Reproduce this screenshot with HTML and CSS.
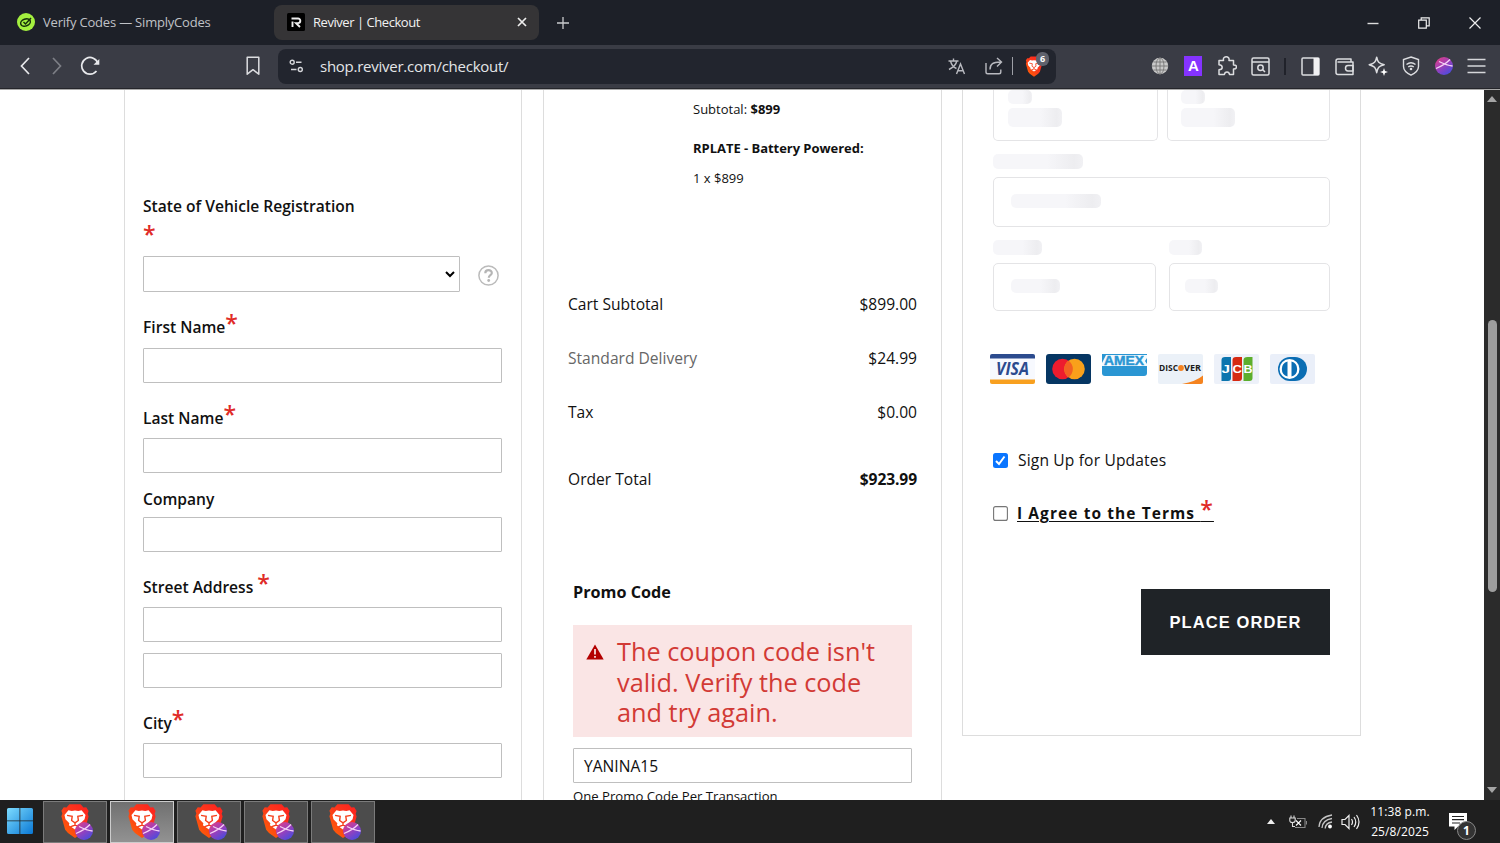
FILE: index.html
```html
<!DOCTYPE html>
<html lang="en">
<head>
<meta charset="utf-8">
<title>Reviver | Checkout</title>
<link rel="stylesheet" href="styles.css">
</head>
<body>
<svg class="defs" width="0" height="0" aria-hidden="true">
  <defs>
    <linearGradient id="flame" x1="1" y1="0" x2="0" y2="1"><stop offset="0" stop-color="#ff1f1f"/><stop offset=".5" stop-color="#fb3a1b"/><stop offset="1" stop-color="#ff6a00"/></linearGradient>
    <linearGradient id="orb" x1="0" y1="0" x2=".7" y2="1"><stop offset="0" stop-color="#e8407c"/><stop offset=".5" stop-color="#a13fb8"/><stop offset="1" stop-color="#4b4bdd"/></linearGradient>
    <linearGradient id="win" x1="0" y1="0" x2="1" y2="1"><stop offset="0" stop-color="#7ddcff"/><stop offset="1" stop-color="#0a78d4"/></linearGradient>
    <symbol id="lion" viewBox="0 0 32 36">
      <path fill="url(#flame)" d="M10 0h12l3 3.500 3-.3 2.500 4-1 3 1 3-4 14-3 3.500L16 36l-7.500-5.300-3-3.500L1.500 13l1-3-1-3L4 3.200l3 .3z"/>
      <path fill="#fff" d="M9 6.500l3.500.8L16 6.800l3.500.5L23 6.500l4.200 5-1 4.500-4.200 4.500.5 2-6.500 4.500-6.500-4.500.5-2L5.800 16l-1-4.500z"/>
      <path fill="none" stroke="#f5401c" stroke-width="1.500" d="M7.500 12l5.500 1-.6 4.500 3.600 2.500 3.600-2.500-.6-4.500 5.500-1M16 20v2.500M11 24.200l5-1.900 5 1.900"/>
    </symbol>
    <symbol id="ball" viewBox="0 0 18 18">
      <circle cx="9" cy="9" r="9" fill="url(#orb)"/>
      <path fill="none" stroke="#f6d3f6" stroke-width="1.300" d="M1 11.500C6 9.500 11 6.500 15 2.500M4 4.500c4 2 8 4 13.500 4.500"/>
    </symbol>
  </defs>
</svg>

<header class="tabs">
  <div class="tab">
    <svg width="18" height="18" viewBox="0 0 18 18"><circle cx="9" cy="9" r="9" fill="#a4f03f"/><g fill="none" stroke="#17300c" stroke-width="1.500"><ellipse cx="8.500" cy="9.500" rx="5" ry="3.500" transform="rotate(-20 8.500 9.500)"/><path d="M6.500 9l2 2 5.500-6"/></g></svg>
    <span class="tab-name">Verify Codes — SimplyCodes</span>
  </div>
  <div class="tab tab-on">
    <svg width="18" height="18" viewBox="0 0 18 18"><rect width="18" height="18" rx="1.500" fill="#000"/><path d="M4.500 5.500H11a2.300 2.300 0 0 1 0 4.600H9l4 3.900M5.500 8.500V14" fill="none" stroke="#eee" stroke-width="1.900"/></svg>
    <span class="tab-name">Reviver | Checkout</span>
    <svg class="tab-x" width="10" height="10" viewBox="0 0 10 10"><path d="M1 1l8 8M9 1L1 9" stroke="#eee" stroke-width="1.700"/></svg>
  </div>
  <svg class="plus" width="12" height="12" viewBox="0 0 12 12"><path d="M6 0v12M0 6h12" stroke="#c9cacd" stroke-width="1.300"/></svg>
  <div class="win-btns">
    <svg width="12" height="12" viewBox="0 0 12 12"><path d="M.5 6.500h11" stroke="#ddd" stroke-width="1.400"/></svg>
    <svg width="12" height="12" viewBox="0 0 12 12"><path d="M.7 3.200h7.600v8H.7zM3.200 3V.8h8v8H8.500" fill="none" stroke="#eee" stroke-width="1.200"/></svg>
    <svg width="12" height="12" viewBox="0 0 12 12"><path d="M.5.500l11 11M11.500.500l-11 11" stroke="#eee" stroke-width="1.200"/></svg>
  </div>
</header>

<nav class="toolbar">
  <svg class="back" width="10" height="18" viewBox="0 0 10 18"><path d="M9 1L1.500 9 9 17" fill="none" stroke="#e8e9ec" stroke-width="1.700"/></svg>
  <svg class="fwd" width="10" height="18" viewBox="0 0 10 18"><path d="M1 1l7.500 8L1 17" fill="none" stroke="#7d7f86" stroke-width="1.700"/></svg>
  <svg class="reload" width="20" height="20" viewBox="0 0 20 20"><path d="M18 7.500A8.300 8.300 0 1 0 16.500 15" fill="none" stroke="#e8e9ec" stroke-width="1.700"/><path d="M13.500 8.800h5.800V3z" fill="#e8e9ec"/></svg>
  <svg class="mark" width="14" height="20" viewBox="0 0 14 20"><path d="M1.200 1.200h11.600v17L7 13.700l-5.800 4.500z" fill="none" stroke="#dcdde0" stroke-width="1.500" stroke-linejoin="round"/></svg>
  <div class="url">
    <svg width="15" height="14" viewBox="0 0 15 14"><g fill="none" stroke="#d5d6da" stroke-width="1.400"><circle cx="3.200" cy="3.200" r="2"/><path d="M7 3.200h5.500M2 10.500h5.500"/><circle cx="11.300" cy="10.500" r="2"/></g></svg>
    <span class="address">shop.reviver.com/checkout/</span>
    <svg class="translate" width="18" height="17" viewBox="0 0 18 17"><path d="M.5 3h10M5.500.500V3M8.800 3C8 7 4 10 1 11.500M2.500 3C3.500 7 6 9.500 8.500 10.500M8.500 16l4-10 4 10M10 12.700h5.200" fill="none" stroke="#b9bac0" stroke-width="1.400"/></svg>
    <svg class="share" width="18" height="18" viewBox="0 0 18 18"><path d="M1 6v9q0 1.800 1.800 1.800H14q1.800 0 1.800-1.800v-2.500M5 12.500C5 7 8 4.800 16 5M12 1l4.500 4-4.500 4.500" fill="none" stroke="#b9bac0" stroke-width="1.400"/></svg>
    <i class="bar"></i>
    <div class="shield"><svg width="18" height="21"><use href="#lion"/></svg><b class="count">6</b></div>
  </div>
  <div class="ext">
    <svg width="18" height="18" viewBox="0 0 18 18"><circle cx="9" cy="9" r="8.200" fill="#c9c9c9"/><path d="M9 1v16M1 9h16M2.500 5h13M2.500 13h13" stroke="#777" fill="none" stroke-width=".9"/><ellipse cx="9" cy="9" rx="4" ry="8" fill="none" stroke="#777" stroke-width=".9"/></svg>
    <span class="letter">A</span>
    <svg width="20" height="20" viewBox="0 0 20 20"><path d="M2 4.500h4.500C5.800 1.500 8 .8 9.300.8s3.300.9 2.700 3.700h4.500V9c3-.2 3 1.500 3 2s-.3 2-3 2v5.500h-4c-.3-2-1.500-2.500-2.500-2.500s-2.300.5-2.600 2.500H2v-4.800c2.500 0 3.200-1.200 3.200-2.500S4.300 9 2 8.800z" fill="none" stroke="#dcdde0" stroke-width="1.500" stroke-linejoin="round"/></svg>
    <svg width="19" height="19" viewBox="0 0 19 19"><g fill="none" stroke="#dcdde0" stroke-width="1.500"><rect x="1" y="1" width="17" height="17" rx="1.500"/><path d="M1 5h17M11.500 12.500l2.500 2.500"/><circle cx="9.500" cy="10.700" r="2.700"/></g></svg>
    <i class="sep"></i>
    <svg width="19" height="19" viewBox="0 0 19 19"><rect x="1" y="1" width="17" height="17" rx="1" fill="none" stroke="#dcdde0" stroke-width="1.500"/><path d="M12.500 1H18v17h-5.500z" fill="#f1f1f3"/></svg>
    <svg width="19" height="19" viewBox="0 0 19 19"><g fill="none" stroke="#dcdde0" stroke-width="1.500" stroke-linejoin="round"><path d="M16 5V2H3Q1 2 1 4v11.500Q1 17.500 3 17.500h15V5H2.500"/><path d="M18 8.500h-5q-2.500 0-2.500 2.700t2.500 2.700h5z"/></g></svg>
    <svg width="20" height="20" viewBox="0 0 20 20"><path d="M8.700 1.200c1 5 2 6.200 7.500 7.500-5.500 1.500-6.500 2.800-7.500 8-1-5.200-2.200-6.500-7.500-8 5.300-1.300 6.500-2.500 7.500-7.500z" fill="none" stroke="#dcdde0" stroke-width="1.500" stroke-linejoin="round"/><path d="M16 12l1 3 3 1-3 1-1 3-1-3-3-1 3-1z" fill="#fff"/></svg>
    <svg width="18" height="20" viewBox="0 0 18 20"><g fill="none" stroke="#dcdde0" stroke-width="1.400"><path d="M9 1l7.500 2.500v7q0 5-7.500 8.700Q1.500 15.500 1.500 10.500v-7z"/><path d="M4.500 8.500q4.500-3.500 9 0M6.200 11q2.800-2 5.600 0"/></g><circle cx="9" cy="13" r="1.300" fill="#dcdde0"/></svg>
    <svg width="18" height="18"><use href="#ball"/></svg>
    <svg width="19" height="16" viewBox="0 0 19 16"><path d="M.5 1.500h18M.5 8h18M.5 14.500h18" stroke="#d5d6da" stroke-width="1.700"/></svg>
  </div>
</nav>

<div class="view">
  <main class="page">
    <section class="col ship">
      <div class="field state"><label>State of Vehicle Registration<br><sup>*</sup></label>
        <div class="pick"><div class="box select"><svg width="10" height="7" viewBox="0 0 10 7"><path d="M1 1l4 4 4-4" fill="none" stroke="#000" stroke-width="2"/></svg></div>
        <svg class="help" width="21" height="21" viewBox="0 0 21 21"><circle cx="10.500" cy="10.500" r="9.600" fill="none" stroke="#bbb" stroke-width="1.500"/><path d="M7.300 8.200c0-4 6.500-4 6.500-.3 0 2.300-3 2.300-3 4.800" fill="none" stroke="#b5b5b5" stroke-width="2.200"/><circle cx="10.700" cy="15.500" r="1.400" fill="#b5b5b5"/></svg></div>
      </div>
      <div class="field first"><label>First Name<sup>*</sup></label><div class="box"></div></div>
      <div class="field last"><label>Last Name<sup>*</sup></label><div class="box"></div></div>
      <div class="field company"><label>Company</label><div class="box"></div></div>
      <div class="field street"><label>Street Address <sup>*</sup></label><div class="box"></div><div class="box"></div></div>
      <div class="field city"><label>City<sup>*</sup></label><div class="box"></div></div>
    </section>

    <section class="col order">
      <div class="item">
        <p>Subtotal: <b>$899</b></p>
        <p class="item-name">RPLATE - Battery Powered:</p>
        <p>1 x $899</p>
      </div>
      <div class="totals">
        <div class="row"><span>Cart Subtotal</span><span>$899.00</span></div>
        <div class="row"><span class="muted">Standard Delivery</span><span>$24.99</span></div>
        <div class="row"><span>Tax</span><span>$0.00</span></div>
        <div class="row grand"><span>Order Total</span><b>$923.99</b></div>
      </div>
      <div class="promo">
        <h2>Promo Code</h2>
        <div class="error">
          <svg width="18" height="16" viewBox="0 0 18 16"><path d="M9 .500L17.700 15.500H.3z" fill="#b30000"/><path d="M9 5v5.500M9 12v1.800" stroke="#fae5e5" stroke-width="1.700"/></svg>
          <span>The coupon code isn't<br>valid. Verify the code<br>and try again.</span>
        </div>
        <div class="box code">YANINA15</div>
        <p class="note">One Promo Code Per Transaction</p>
      </div>
    </section>

    <section class="col pay">
      <div class="pair methods">
        <div class="card"><i class="sk s23"></i><i class="sk s53"></i></div>
        <div class="card"><i class="sk s23"></i><i class="sk s53"></i></div>
      </div>
      <i class="sk s90"></i>
      <div class="card wide"><i class="sk s90 thin"></i></div>
      <div class="pair small">
        <div class="group"><i class="sk s49"></i><div class="card"><i class="sk s49 thin"></i></div></div>
        <div class="group"><i class="sk s32"></i><div class="card"><i class="sk s32 thin"></i></div></div>
      </div>
      <div class="brands">
        <svg width="45" height="30" viewBox="0 0 45 30"><rect width="45" height="30" rx="2" fill="#f7f9fe"/><path d="M0 4.500V2q0-2 2-2h41q2 0 2 2v2.500z" fill="#2c4b8e"/><path d="M0 25.500h45V28q0 2-2 2H2q-2 0-2-2z" fill="#f8a01f"/><text x="6" y="20.500" textLength="33" lengthAdjust="spacingAndGlyphs" class="visa">VISA</text></svg>
        <svg width="45" height="30" viewBox="0 0 45 30"><rect width="45" height="30" rx="3" fill="#063663"/><circle cx="16.500" cy="15" r="10.300" fill="#ed1c2e"/><circle cx="28.500" cy="15" r="10.300" fill="#f9a01b"/><path d="M22.500 6.600a10.300 10.300 0 0 1 0 16.800 10.300 10.300 0 0 1 0-16.800z" fill="#f26122"/></svg>
        <svg width="45" height="30" viewBox="0 0 45 30"><path d="M0 0h45v19q0 3-3 3H3q-3 0-3-3z" fill="#2a96d3"/><path d="M4 1h41v3l-2 3 2 3v2H0V9z" fill="#f4f9fd"/><text x="2" y="11" textLength="40" lengthAdjust="spacingAndGlyphs" class="amex">AMEX</text></svg>
        <svg width="45" height="30" viewBox="0 0 45 30"><rect width="45" height="30" rx="2" fill="#ebf1f8"/><path d="M24 30q14-2.500 21-8.500V28q0 2-2 2z" fill="#f5831f"/><text x="1" y="17.300" textLength="19" lengthAdjust="spacingAndGlyphs" class="disc">DISC</text><circle cx="23" cy="14" r="2.900" fill="#f58220"/><text x="26" y="17.300" textLength="17" lengthAdjust="spacingAndGlyphs" class="disc">VER</text></svg>
        <svg width="45" height="30" viewBox="0 0 45 30"><rect width="45" height="30" rx="2" fill="#edf1f9"/><path d="M11 3h6v21q0 3-3 3H7.500V6q0-3 3.500-3z" fill="#0b75ae"/><path d="M22 3h6v21q0 3-3 3h-6.500V6q0-3 3.500-3z" fill="#d62a12"/><path d="M33.500 3h5v21q0 3-3 3h-6V6q0-3 4-3z" fill="#5cae2c"/><g class="jcb"><text x="7.500" y="18.500" textLength="8.500" lengthAdjust="spacingAndGlyphs">J</text><text x="18.500" y="18.500" textLength="9.500" lengthAdjust="spacingAndGlyphs">C</text><text x="29.500" y="18.500" textLength="9" lengthAdjust="spacingAndGlyphs">B</text></g></svg>
        <svg width="45" height="30" viewBox="0 0 45 30"><rect width="45" height="30" rx="2" fill="#eaeff9"/><rect x="8" y="3" width="29" height="24" rx="12" fill="#0a6db3"/><circle cx="19.500" cy="15" r="10" fill="#fff"/><path d="M17.500 7.500v15a7.800 7.800 0 0 1 0-15zM21.500 7.500v15a7.800 7.800 0 0 0 0-15z" fill="#0a6db3"/></svg>
      </div>
      <div class="check updates"><svg width="15" height="15" viewBox="0 0 15 15"><rect width="15" height="15" rx="2.500" fill="#0a75ff"/><path d="M3 8l3 3 5.500-7.500" fill="none" stroke="#fff" stroke-width="2"/></svg><span>Sign Up for Updates</span></div>
      <div class="check terms"><svg width="15" height="15" viewBox="0 0 15 15"><rect x=".6" y=".6" width="13.800" height="13.800" rx="2" fill="#fff" stroke="#767676" stroke-width="1.100"/></svg><span>I Agree to the Terms <sup>*</sup></span></div>
      <button class="place">PLACE ORDER</button>
    </section>
  </main>
  <div class="scroll">
    <svg width="10" height="6" viewBox="0 0 10 6"><path d="M0 6l5-6 5 6z" fill="#a5a5a5"/></svg>
    <i class="thumb"></i>
    <svg class="down" width="10" height="6" viewBox="0 0 10 6"><path d="M0 0l5 6 5-6z" fill="#a5a5a5"/></svg>
  </div>
</div>

<footer class="taskbar">
  <svg class="start" width="26" height="26" viewBox="0 0 26 26"><path fill="url(#win)" d="M1.500 0h11v12.500H0v-11Q0 0 1.500 0zM13.300 0h11.200Q26 0 26 1.500v11H13.300zM0 13.300h12.500V26h-11Q0 26 0 24.500zM13.300 13.300H26v11.200q0 1.500-1.500 1.500H13.300z"/></svg>
  <div class="apps">
    <div class="app"><svg width="33" height="36" viewBox="0 0 33 36"><use href="#lion" width="30" height="34"/><use href="#ball" x="15" y="18" width="18" height="18"/></svg></div>
    <div class="app app-on"><svg width="33" height="36" viewBox="0 0 33 36"><use href="#lion" width="30" height="34"/><use href="#ball" x="15" y="18" width="18" height="18"/></svg></div>
    <div class="app"><svg width="33" height="36" viewBox="0 0 33 36"><use href="#lion" width="30" height="34"/><use href="#ball" x="15" y="18" width="18" height="18"/></svg></div>
    <div class="app"><svg width="33" height="36" viewBox="0 0 33 36"><use href="#lion" width="30" height="34"/><use href="#ball" x="15" y="18" width="18" height="18"/></svg></div>
    <div class="app"><svg width="33" height="36" viewBox="0 0 33 36"><use href="#lion" width="30" height="34"/><use href="#ball" x="15" y="18" width="18" height="18"/></svg></div>
  </div>
  <div class="tray">
    <svg width="8" height="5" viewBox="0 0 8 5"><path d="M0 5l4-5 4 5z" fill="#eee"/></svg>
    <svg class="power" width="18" height="14" viewBox="0 0 18 14"><g fill="none" stroke="#ddd" stroke-width="1.100"><path d="M2 .5V3M5 .5V3M.8 3h5.400v2.500q0 2-2.700 2t-2.700-2zM3.500 7.500v4H6"/><path d="M8 3.500h8v9H6" stroke="#888"/><path d="M17.500 6v3.500" stroke="#888"/><path d="M7 5.500l5 5M12 5.500l-5 5" stroke="#fff"/></g></svg>
    <svg class="wifi" width="15" height="15" viewBox="0 0 15 15"><g fill="none" stroke="#c5c5c5" stroke-width="1.300"><path d="M1 13Q1.500 3 14 1M4 14Q4.500 6 14 4.500M7.200 14.500Q7.500 9 14 8"/></g><circle cx="12" cy="12.500" r="1.900" fill="#fff"/></svg>
    <svg class="sound" width="19" height="16" viewBox="0 0 19 16"><path d="M1 5.500h3l4-4v13l-4-4H1zM10.500 5q2 3 0 6M13 3q3.500 5 0 10M15.500 1q5 7 0 14" fill="none" stroke="#eee" stroke-width="1.200"/></svg>
    <div class="clock"><span>11:38 p.m.</span><span>25/8/2025</span></div>
    <div class="notes"><svg width="18" height="18" viewBox="0 0 18 18"><path d="M0 0h18v13.500H9L5.500 17v-3.500H0z" fill="#fff"/><path d="M3 3.500h12M3 6.700h12M3 10h8" stroke="#222" stroke-width="1.200"/></svg><b class="badge">1</b></div>
  </div>
</footer>
</body>
</html>
```
FILE: styles.css
```css
* { box-sizing: border-box; }
body { margin: 0; width: 1500px; height: 843px; overflow: hidden; display: flex; flex-direction: column; background: #fff; font-family: "Open Sans", "Noto Sans", sans-serif; color: #111; }
svg { display: block; flex: none; }
i { display: block; flex: none; }
p, h2 { margin: 0; }
.defs { position: absolute; }

/* browser chrome */
.tabs { flex: none; height: 45px; background: #1d2028; display: flex; align-items: center; padding: 0 19px 0 7px; font-size: 13px; color: #c0c2c7; }
.tab { width: 267px; height: 35px; padding: 0 12px 1px 10px; display: flex; align-items: center; gap: 8px; white-space: nowrap; border-radius: 8px; }
.tab-name { letter-spacing: -0.2px; line-height: 18px; padding-bottom: 1px; }
.tab-on { width: 265px; background: #353436; color: #f2f2f2; padding-left: 13px; }
.tab-on .tab-name { letter-spacing: -0.45px; }
.tab-x { margin-left: auto; }
.plus { margin-left: 18px; }
.win-btns { margin-left: auto; display: flex; gap: 39px; }
.toolbar { flex: none; height: 45px; background: #3a3c45; border-bottom: 1px solid #aaa; display: flex; align-items: center; padding: 0 14px 2px 20px; box-shadow: inset 0 -1px #25262b; }
.fwd { margin-left: 22px; }
.reload { margin-left: 18px; }
.mark { margin-left: 146px; }
.url { margin-left: 18px; width: 778px; height: 35px; border-radius: 8px; background: #22252e; display: flex; align-items: center; padding: 0 8px 0 11px; }
.address { margin-left: 16px; font-size: 15px; letter-spacing: -.25px; color: #e4e5e8; width: 230px; }
.translate { margin-left: auto; }
.share { margin-left: 19px; }
.bar { width: 1px; height: 18px; margin: 0 12px 0 9px; background: #9d9fa6; }
.shield { position: relative; margin-right: 5px; }
.count { position: absolute; left: 11px; top: -4px; width: 13px; height: 14px; border-radius: 6px; background: #5f626d; color: #fff; font-size: 9px; line-height: 14px; text-align: center; }
.ext { flex: 1; margin-left: 95px; display: flex; align-items: center; justify-content: space-between; }
.letter { width: 18px; height: 20px; margin-left: 1px; background: #8533ff; color: #fff; font: bold 15px/20px "Liberation Sans", sans-serif; text-align: center; }
.sep { width: 2px; height: 17px; margin: 0 1px 0 0; background: #20222a; }

/* page */
.view { flex: 1; min-height: 0; display: flex; overflow: hidden; }
.page { flex: 1; padding-left: 124px; display: flex; gap: 21px; align-items: flex-start; }
.col { width: 398px; height: 730px; border: 1px solid #ddd; border-top: 0; }
.scroll { width: 16px; background: #2b2b2b; display: flex; flex-direction: column; align-items: center; padding: 6px 0 7px; }
.thumb { width: 9px; height: 272px; margin-top: 218px; border-radius: 5px; background: #9d9d9d; }
.down { margin-top: auto; }

.ship { padding: 104px 19px 0 18px; font-size: 15.600px; font-weight: 600; }
.field label { display: block; height: 24px; line-height: 24px; white-space: pre; }
.field.state label { height: 48px; }
sup { color: #e02b27; font-size: 23px; line-height: 0; vertical-align: 1px; font-weight: 600; }
.state sup { vertical-align: -7px; }
.box { height: 35px; border: 1px solid #bfbfbf; border-radius: 1px; background: #fff; }
.pick { margin-top: 14px; display: flex; align-items: center; gap: 18px; }
.help { margin-top: 2px; }
.select { width: 317px; height: 36px; display: flex; align-items: center; justify-content: flex-end; padding-right: 4px; }
.first { margin-top: 23px; }
.first .box { margin-top: 9px; }
.last { margin-top: 23px; }
.last .box { margin-top: 8px; }
.company { margin-top: 14px; }
.company .box { margin-top: 6px; }
.street { margin-top: 23px; }
.street .box { margin-top: 8px; }
.street .box + .box { margin-top: 11px; }
.city { margin-top: 23px; }
.city .box { margin-top: 8px; }

.order { width: 399px; padding: 8px 24px 0 24px; font-size: 15.600px; }
.item { padding-left: 125px; height: 179px; font-size: 13px; line-height: 22px; }
.item-name { margin: 17px 0 8px; font-weight: 700; letter-spacing: -.04px; white-space: nowrap; }
.totals { padding-top: 15px; }
.row { display: flex; justify-content: space-between; height: 54px; line-height: 24px; }
.row.grand { margin-top: 13px; height: 101px; }
.row b { letter-spacing: -.1px; }
.muted { color: #666; }
.promo { width: 339px; margin-left: 5px; }
.promo h2 { font-size: 16.200px; line-height: 24px; padding-top: 12px; }
.error { margin-top: 21px; height: 112px; padding: 11px 13px; background: #fae5e5; color: #d23a35; font-size: 25.300px; line-height: 30.500px; display: flex; gap: 13px; white-space: nowrap; }
.error svg { margin-top: 8px; }
.code { margin-top: 11px; padding-left: 10px; line-height: 35px; }
.note { font-size: 13.150px; line-height: 20px; margin-top: 3px; white-space: nowrap; }

.pay { width: 399px; height: 646px; padding: 0 30px; margin-left: -1px; }
.pair { display: flex; justify-content: space-between; }
.card { border: 1px solid #e4e4e6; border-radius: 5px; }
.sk { height: 15px; border-radius: 5px; background: linear-gradient(90deg, #f6f6f9 60%, #ededf0 90%, #f1f1f4); }
.thin { height: 14px; }
.s23 { width: 24px; height: 14px; }
.s53 { width: 54px; height: 19px; margin-top: 4px; }
.s90 { width: 90px; }
.s49 { width: 49px; }
.s32 { width: 33px; }
.methods .card { width: 165px; height: 51px; border-top: 0; border-radius: 0 0 5px 5px; padding-left: 14px; margin-bottom: 13px; }
.methods .card + .card { width: 163px; padding-left: 13px; }
.wide { height: 50px; margin: 8px 0 13px; padding: 16px 17px; }
.group { width: 163px; }
.group + .group { width: 161px; }
.group .card { height: 48px; margin-top: 8px; padding: 15px 17px; }
.group + .group .card { padding-left: 15px; }
.brands { display: flex; gap: 11px; margin: 43px 0 0 -3px; }
.visa { font: italic bold 17px "Open Sans", sans-serif; fill: #2c4b8e; }
.amex { font: bold 12px "Liberation Sans", sans-serif; fill: #2a96d3; stroke: #2a96d3; stroke-width: .4; }
.disc { font: bold 9px "Open Sans", sans-serif; fill: #1c1c1c; }
.jcb { font: bold 10.500px "Liberation Sans", sans-serif; fill: #fff; }
.check { display: flex; align-items: center; height: 24px; white-space: nowrap; }
.updates { margin-top: 64px; gap: 10px; font-size: 15.600px; letter-spacing: .15px; }
.terms { margin-top: 29px; gap: 9px; font-size: 15.500px; font-weight: 700; letter-spacing: 1.080px; }
.terms span { text-decoration: underline; text-underline-offset: 2px; line-height: 24px; }
.place { display: block; margin: 64px 0 0 auto; width: 189px; height: 66px; padding: 0; border: 0; background: #1f2327; color: #fff; font: bold 16.500px "Liberation Sans", sans-serif; letter-spacing: 1.080px; }

/* taskbar */
.taskbar { flex: none; height: 43px; background: #1f1f1f; display: flex; align-items: center; padding: 0 33px 0 7px; }
.start { margin-bottom: 1px; }
.apps { display: flex; gap: 3px; margin-left: 10px; }
.app { width: 64px; height: 42px; margin-top: 1px; padding-left: 2px; border: 1px solid #7b7b7b; background: #4c4c4c; display: flex; align-items: center; justify-content: center; }
.app-on { background: linear-gradient(#707070, #929292); border-color: #ccc; }
.tray { margin-left: auto; display: flex; align-items: center; color: #fff; }
.power { margin-left: 14px; }
.wifi { margin-left: 11px; }
.sound { margin-left: 8px; }
.clock { width: 60px; margin: 0 19px 0 10px; display: flex; flex-direction: column; align-items: center; font-size: 12px; line-height: 20px; white-space: nowrap; letter-spacing: .1px; }
.notes { position: relative; width: 18px; }
.badge { position: absolute; left: 8px; top: 8px; width: 19px; height: 19px; border: 1px solid #888; border-radius: 50%; background: #333; font-size: 12px; line-height: 17px; text-align: center; }
```
